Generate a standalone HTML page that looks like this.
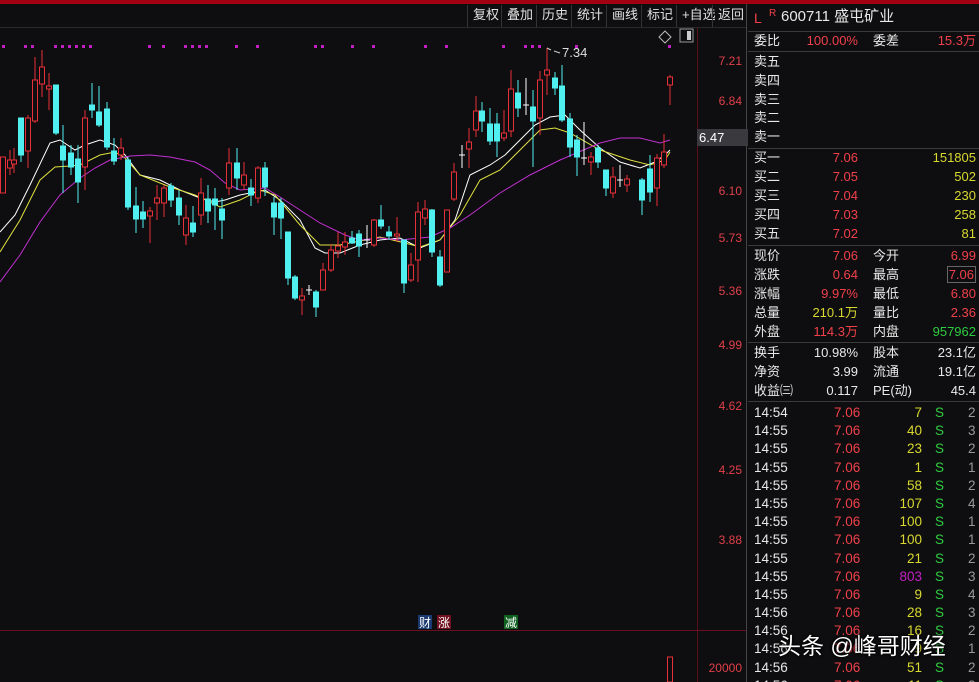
<!DOCTYPE html>
<html style="width:979px;height:682px;overflow:hidden"><head><meta charset="utf-8"><style>
body{margin:0;width:979px;height:682px;background:#0e0e10;overflow:hidden;position:relative;font-family:"Liberation Sans","Noto Sans CJK SC",sans-serif;font-size:13px;color:#ddd}
.a{position:absolute;white-space:nowrap;line-height:16px}
.r{text-align:right}
.red{color:#f0404a}.yel{color:#d8d830}.grn{color:#2ecc40}.wh{color:#e8e8e8}.gr{color:#999}.pur{color:#c020c0}
.tb{position:absolute;top:5px;height:22px;line-height:20px;color:#e0e0e0;font-size:13px;border-left:1px solid #333;padding:0 5px}
.sep{position:absolute;left:748px;width:231px;height:1px;background:#3a3a3a}
.pl{position:absolute;left:700px;width:42px;text-align:right;color:#e0404a;font-size:12px}
.tk{position:relative;height:18.2px}
</style></head><body>
<div style="position:absolute;left:0;top:0;width:979px;height:4px;background:#a00010"></div>
<div style="position:absolute;left:0;top:27px;width:746px;height:1px;background:#2a2a2a"></div>
<div class="tb" style="left:467px">复权</div><div class="tb" style="left:501px">叠加</div><div class="tb" style="left:536px">历史</div><div class="tb" style="left:571px">统计</div><div class="tb" style="left:606px">画线</div><div class="tb" style="left:641px">标记</div><div class="tb" style="left:676px">+自选</div><div class="tb" style="left:712px">返回</div>
<div style="position:absolute;left:746px;top:4px;width:1px;height:678px;background:#444"></div>
<div style="position:absolute;left:697px;top:28px;width:1px;height:654px;background:#5a1018"></div>
<div style="position:absolute;left:0;top:630px;width:746px;height:1px;background:#6a1020"></div>
<svg style="position:absolute;left:0;top:0" width="746" height="682">
<g fill="#c020c0">
<rect x="2" y="45" width="3" height="3"/><rect x="24" y="45" width="3" height="3"/><rect x="31" y="45" width="3" height="3"/><rect x="54" y="45" width="3" height="3"/><rect x="61" y="45" width="3" height="3"/><rect x="68" y="45" width="3" height="3"/><rect x="75" y="45" width="3" height="3"/><rect x="82" y="45" width="3" height="3"/><rect x="89" y="45" width="3" height="3"/><rect x="148" y="45" width="3" height="3"/><rect x="162" y="45" width="3" height="3"/><rect x="184" y="45" width="3" height="3"/><rect x="191" y="45" width="3" height="3"/><rect x="198" y="45" width="3" height="3"/><rect x="205" y="45" width="3" height="3"/><rect x="235" y="45" width="3" height="3"/><rect x="256" y="45" width="3" height="3"/><rect x="314" y="45" width="3" height="3"/><rect x="321" y="45" width="3" height="3"/><rect x="351" y="45" width="3" height="3"/><rect x="372" y="45" width="3" height="3"/><rect x="424" y="45" width="3" height="3"/><rect x="445" y="45" width="3" height="3"/><rect x="502" y="45" width="3" height="3"/><rect x="524" y="45" width="3" height="3"/><rect x="531" y="45" width="3" height="3"/><rect x="538" y="45" width="3" height="3"/><rect x="575" y="45" width="3" height="3"/><rect x="668" y="45" width="3" height="3"/>
</g>
<path d="M665 31l6 6l-6 6l-6-6z" fill="none" stroke="#bbb"/>
<rect x="680" y="29" width="13" height="13" fill="none" stroke="#999"/><rect x="687" y="31" width="4" height="9" fill="#ccc"/>
<g stroke-width="1">
<polyline fill="none" stroke="#fff" points="0,232 15,215 30,185 50,143 60,140 75,150 85,145 100,140 115,145 125,155 140,175 160,180 180,190 200,198 215,202 225,200 240,195 255,192 265,190 280,200 300,220 315,248 325,253 340,253 360,245 380,240 400,238 420,248 440,240 455,220 470,175 490,165 505,155 520,140 535,125 550,117 565,115 580,130 600,148 620,162 640,168 655,162 665,155 670,150"/>
<polyline fill="none" stroke="#e0e040" points="0,252 20,220 40,180 55,167 70,166 80,165 100,155 115,152 125,158 140,175 170,187 195,195 220,207 240,200 260,190 275,195 300,225 320,245 340,245 380,237 405,243 420,247 440,240 460,215 480,180 500,170 520,150 540,130 555,128 570,133 600,150 630,160 650,165 665,160 670,152"/>
<polyline fill="none" stroke="#c030d0" points="0,282 20,255 40,222 60,195 80,178 95,168 110,160 130,156 150,155 170,157 195,162 210,170 225,183 240,190 265,188 280,197 300,210 320,223 345,235 360,240 380,238 400,240 430,237 450,228 470,215 500,193 530,175 560,160 600,143 620,138 640,138 660,143 670,140"/>
</g>
<g stroke="#e8303a" fill="#0e0e10">
<line x1="3" y1="157" x2="3" y2="193"/><rect x="0.5" y="157" width="5" height="36"/>
<line x1="10" y1="150" x2="10" y2="175"/><rect x="7.5" y="160" width="5" height="8"/>
<line x1="14" y1="148" x2="14" y2="173"/><rect x="11.5" y="160" width="5" height="4"/>
<line x1="28" y1="115" x2="28" y2="168"/><rect x="25.5" y="118" width="5" height="33"/>
<line x1="35" y1="57" x2="35" y2="123"/><rect x="32.5" y="80" width="5" height="41"/>
<line x1="42" y1="50" x2="42" y2="97"/><rect x="39.5" y="67" width="5" height="17"/>
<line x1="49" y1="73" x2="49" y2="110"/><rect x="46.5" y="86" width="5" height="3"/>
<line x1="85" y1="110" x2="85" y2="190"/><rect x="82.5" y="118" width="5" height="49"/>
<line x1="121" y1="138" x2="121" y2="160"/><rect x="118.5" y="148" width="5" height="7"/>
<line x1="150" y1="207" x2="150" y2="243"/><rect x="147.5" y="211" width="5" height="5"/>
<line x1="157" y1="185" x2="157" y2="220"/><rect x="154.5" y="198" width="5" height="5"/>
<line x1="164" y1="185" x2="164" y2="217"/><rect x="161.5" y="188" width="5" height="15"/>
<line x1="186" y1="205" x2="186" y2="245"/><rect x="183.5" y="218" width="5" height="17"/>
<line x1="201" y1="178" x2="201" y2="225"/><rect x="198.5" y="193" width="5" height="22"/>
<line x1="229" y1="148" x2="229" y2="195"/><rect x="226.5" y="163" width="5" height="25"/>
<line x1="244" y1="162" x2="244" y2="190"/><rect x="241.5" y="175" width="5" height="10"/>
<line x1="258" y1="166" x2="258" y2="203"/><rect x="255.5" y="168" width="5" height="30"/>
<line x1="302" y1="288" x2="302" y2="315"/><rect x="299.5" y="296" width="5" height="4"/>
<line x1="323" y1="263" x2="323" y2="290"/><rect x="320.5" y="270" width="5" height="20"/>
<line x1="331" y1="244" x2="331" y2="272"/><rect x="328.5" y="250" width="5" height="20"/>
<line x1="338" y1="232" x2="338" y2="258"/><rect x="335.5" y="246" width="5" height="5"/>
<line x1="345" y1="232" x2="345" y2="255"/><rect x="342.5" y="242" width="5" height="5"/>
<line x1="374" y1="219" x2="374" y2="247"/><rect x="371.5" y="220" width="5" height="25"/>
<line x1="397" y1="217" x2="397" y2="242"/><rect x="394.5" y="234" width="5" height="2"/>
<line x1="411" y1="253" x2="411" y2="282"/><rect x="408.5" y="265" width="5" height="15"/>
<line x1="418" y1="202" x2="418" y2="282"/><rect x="415.5" y="212" width="5" height="48"/>
<line x1="425" y1="200" x2="425" y2="225"/><rect x="422.5" y="209" width="5" height="9"/>
<line x1="447" y1="210" x2="447" y2="272"/><rect x="444.5" y="210" width="5" height="62"/>
<line x1="454" y1="163" x2="454" y2="201"/><rect x="451.5" y="172" width="5" height="27"/>
<line x1="469" y1="128" x2="469" y2="168"/><rect x="466.5" y="142" width="5" height="7"/>
<line x1="476" y1="96" x2="476" y2="137"/><rect x="473.5" y="111" width="5" height="19"/>
<line x1="504" y1="110" x2="504" y2="141"/><rect x="501.5" y="133" width="5" height="5"/>
<line x1="511" y1="70" x2="511" y2="137"/><rect x="508.5" y="89" width="5" height="42"/>
<line x1="540" y1="71" x2="540" y2="135"/><rect x="537.5" y="80" width="5" height="38"/>
<line x1="547" y1="48" x2="547" y2="95"/><rect x="544.5" y="70" width="5" height="5"/>
<line x1="591" y1="152" x2="591" y2="175"/><rect x="588.5" y="157" width="5" height="5"/>
<line x1="613" y1="167" x2="613" y2="198"/><rect x="610.5" y="177" width="5" height="16"/>
<line x1="627" y1="175" x2="627" y2="192"/><rect x="624.5" y="179" width="5" height="6"/>
<line x1="657" y1="154" x2="657" y2="206"/><rect x="654.5" y="158" width="5" height="30"/>
<line x1="664" y1="134" x2="664" y2="168"/><rect x="661.5" y="152" width="5" height="13"/>
<line x1="670" y1="75" x2="670" y2="105"/><rect x="667.5" y="77" width="5" height="8"/>
</g>
<g stroke="#50f0f0" fill="#50f0f0">
<line x1="21" y1="118" x2="21" y2="162"/><rect x="18.5" y="118" width="5" height="37"/>
<line x1="56" y1="85" x2="56" y2="135"/><rect x="53.5" y="85" width="5" height="48"/>
<line x1="63" y1="125" x2="63" y2="193"/><rect x="60.5" y="146" width="5" height="14"/>
<line x1="71" y1="145" x2="71" y2="175"/><rect x="68.5" y="153" width="5" height="14"/>
<line x1="78" y1="145" x2="78" y2="203"/><rect x="75.5" y="159" width="5" height="23"/>
<line x1="92" y1="83" x2="92" y2="118"/><rect x="89.5" y="105" width="5" height="5"/>
<line x1="99" y1="86" x2="99" y2="127"/><rect x="96.5" y="112" width="5" height="13"/>
<line x1="107" y1="102" x2="107" y2="150"/><rect x="104.5" y="109" width="5" height="38"/>
<line x1="114" y1="138" x2="114" y2="165"/><rect x="111.5" y="151" width="5" height="10"/>
<line x1="128" y1="157" x2="128" y2="210"/><rect x="125.5" y="160" width="5" height="47"/>
<line x1="136" y1="187" x2="136" y2="233"/><rect x="133.5" y="206" width="5" height="13"/>
<line x1="143" y1="201" x2="143" y2="228"/><rect x="140.5" y="212" width="5" height="7"/>
<line x1="171" y1="183" x2="171" y2="207"/><rect x="168.5" y="186" width="5" height="14"/>
<line x1="179" y1="190" x2="179" y2="225"/><rect x="176.5" y="198" width="5" height="17"/>
<line x1="193" y1="206" x2="193" y2="237"/><rect x="190.5" y="223" width="5" height="9"/>
<line x1="208" y1="185" x2="208" y2="223"/><rect x="205.5" y="199" width="5" height="12"/>
<line x1="215" y1="188" x2="215" y2="230"/><rect x="212.5" y="199" width="5" height="6"/>
<line x1="222" y1="198" x2="222" y2="239"/><rect x="219.5" y="209" width="5" height="11"/>
<line x1="237" y1="148" x2="237" y2="190"/><rect x="234.5" y="163" width="5" height="15"/>
<line x1="251" y1="179" x2="251" y2="206"/><rect x="248.5" y="188" width="5" height="7"/>
<line x1="265" y1="162" x2="265" y2="196"/><rect x="262.5" y="168" width="5" height="19"/>
<line x1="274" y1="197" x2="274" y2="235"/><rect x="271.5" y="203" width="5" height="14"/>
<line x1="281" y1="198" x2="281" y2="239"/><rect x="278.5" y="203" width="5" height="15"/>
<line x1="288" y1="232" x2="288" y2="285"/><rect x="285.5" y="232" width="5" height="46"/>
<line x1="295" y1="275" x2="295" y2="300"/><rect x="292.5" y="277" width="5" height="21"/>
<line x1="316" y1="290" x2="316" y2="317"/><rect x="313.5" y="292" width="5" height="15"/>
<line x1="352" y1="231" x2="352" y2="244"/><rect x="349.5" y="238" width="5" height="5"/>
<line x1="359" y1="230" x2="359" y2="257"/><rect x="356.5" y="234" width="5" height="12"/>
<line x1="381" y1="205" x2="381" y2="229"/><rect x="378.5" y="220" width="5" height="6"/>
<line x1="389" y1="226" x2="389" y2="240"/><rect x="386.5" y="232" width="5" height="4"/>
<line x1="404" y1="240" x2="404" y2="293"/><rect x="401.5" y="240" width="5" height="43"/>
<line x1="432" y1="209" x2="432" y2="257"/><rect x="429.5" y="210" width="5" height="42"/>
<line x1="440" y1="250" x2="440" y2="287"/><rect x="437.5" y="257" width="5" height="28"/>
<line x1="482" y1="102" x2="482" y2="132"/><rect x="479.5" y="111" width="5" height="10"/>
<line x1="490" y1="108" x2="490" y2="145"/><rect x="487.5" y="124" width="5" height="17"/>
<line x1="497" y1="113" x2="497" y2="157"/><rect x="494.5" y="124" width="5" height="17"/>
<line x1="518" y1="80" x2="518" y2="117"/><rect x="515.5" y="93" width="5" height="15"/>
<line x1="533" y1="90" x2="533" y2="167"/><rect x="530.5" y="107" width="5" height="14"/>
<line x1="555" y1="72" x2="555" y2="95"/><rect x="552.5" y="78" width="5" height="10"/>
<line x1="562" y1="65" x2="562" y2="122"/><rect x="559.5" y="86" width="5" height="34"/>
<line x1="570" y1="113" x2="570" y2="157"/><rect x="567.5" y="119" width="5" height="28"/>
<line x1="577" y1="135" x2="577" y2="176"/><rect x="574.5" y="140" width="5" height="17"/>
<line x1="598" y1="145" x2="598" y2="168"/><rect x="595.5" y="148" width="5" height="14"/>
<line x1="606" y1="170" x2="606" y2="196"/><rect x="603.5" y="170" width="5" height="18"/>
<line x1="642" y1="178" x2="642" y2="215"/><rect x="639.5" y="180" width="5" height="20"/>
<line x1="650" y1="155" x2="650" y2="202"/><rect x="647.5" y="169" width="5" height="23"/>
</g>
<g stroke="#fff">
<line x1="309" y1="285" x2="309" y2="295"/><line x1="306" y1="290" x2="312" y2="290"/>
<line x1="367" y1="225" x2="367" y2="248"/><line x1="364" y1="240" x2="370" y2="240"/>
<line x1="462" y1="145" x2="462" y2="168"/><line x1="459" y1="155" x2="465" y2="155"/>
<line x1="526" y1="78" x2="526" y2="115"/><line x1="523" y1="105" x2="529" y2="105"/>
<line x1="584" y1="122" x2="584" y2="165"/><line x1="581" y1="158" x2="587" y2="158"/>
<line x1="620" y1="165" x2="620" y2="187"/><line x1="617" y1="180" x2="623" y2="180"/>
<path d="M547 48l4 2m3 1l6 2" fill="none" stroke="#ccc"/>
</g>
<text x="562" y="57" fill="#ddd" font-size="13" font-family="Liberation Sans">7.34</text>
<rect x="667.5" y="657" width="5" height="25" fill="none" stroke="#e8303a"/>
<rect x="418" y="615" width="14" height="14" fill="#1a3a70"/><text x="419" y="627" fill="#fff" font-size="12" font-family="Noto Sans CJK SC">财</text>
<rect x="437" y="615" width="14" height="14" fill="#701020"/><text x="438" y="627" fill="#fff" font-size="12" font-family="Noto Sans CJK SC">涨</text>
<rect x="504" y="615" width="14" height="14" fill="#106020"/><text x="505" y="627" fill="#fff" font-size="12" font-family="Noto Sans CJK SC">减</text>
</svg>
<div class="pl" style="top:54px">7.21</div>
<div class="pl" style="top:94px">6.84</div>
<div class="pl" style="top:184px">6.10</div>
<div class="pl" style="top:231px">5.73</div>
<div class="pl" style="top:284px">5.36</div>
<div class="pl" style="top:338px">4.99</div>
<div class="pl" style="top:399px">4.62</div>
<div class="pl" style="top:463px">4.25</div>
<div class="pl" style="top:533px">3.88</div>
<div class="pl" style="top:661px">20000</div>
<div style="position:absolute;left:697px;top:129px;width:49px;height:17px;background:#3a3a3e;color:#fff;font-size:13px;line-height:17px;padding-left:2px">6.47</div>

<div class="a red" style="left:754px;top:10px;font-size:14px">L</div>
<div class="a red" style="left:769px;top:6px;font-size:10px">R</div>
<div class="a wh" style="left:781px;top:9px;font-size:15px">600711 盛屯矿业</div>
<div class="sep" style="top:31px"></div>
<div class="a wh" style="left:754px;top:33px">委比</div><div class="a red r" style="left:800px;width:58px;top:33px">100.00%</div>
<div class="a wh" style="left:873px;top:33px">委差</div><div class="a red r" style="left:900px;width:76px;top:33px">15.3万</div>
<div class="sep" style="top:51px"></div>
<div class="a wh" style="left:754px;top:54px">卖五</div>
<div class="a wh" style="left:754px;top:73px">卖四</div>
<div class="a wh" style="left:754px;top:92px">卖三</div>
<div class="a wh" style="left:754px;top:110px">卖二</div>
<div class="a wh" style="left:754px;top:129px">卖一</div>
<div class="sep" style="top:148px"></div>
<div class="a wh" style="left:754px;top:150px">买一</div><div class="a red r" style="left:800px;width:58px;top:150px">7.06</div><div class="a yel r" style="left:900px;width:76px;top:150px">151805</div>
<div class="a wh" style="left:754px;top:169px">买二</div><div class="a red r" style="left:800px;width:58px;top:169px">7.05</div><div class="a yel r" style="left:900px;width:76px;top:169px">502</div>
<div class="a wh" style="left:754px;top:188px">买三</div><div class="a red r" style="left:800px;width:58px;top:188px">7.04</div><div class="a yel r" style="left:900px;width:76px;top:188px">230</div>
<div class="a wh" style="left:754px;top:207px">买四</div><div class="a red r" style="left:800px;width:58px;top:207px">7.03</div><div class="a yel r" style="left:900px;width:76px;top:207px">258</div>
<div class="a wh" style="left:754px;top:226px">买五</div><div class="a red r" style="left:800px;width:58px;top:226px">7.02</div><div class="a yel r" style="left:900px;width:76px;top:226px">81</div>
<div class="sep" style="top:245px"></div>
<div class="a wh" style="left:754px;top:248px">现价</div><div class="a red r" style="left:800px;width:58px;top:248px">7.06</div><div class="a wh" style="left:873px;top:248px">今开</div><div class="a red r" style="left:900px;width:76px;top:248px">6.99</div>
<div class="a wh" style="left:754px;top:267px">涨跌</div><div class="a red r" style="left:800px;width:58px;top:267px">0.64</div><div class="a wh" style="left:873px;top:267px">最高</div><div class="a red r" style="left:900px;width:76px;top:267px"><span style="border:1px solid #666;padding:0 1px">7.06</span></div>
<div class="a wh" style="left:754px;top:286px">涨幅</div><div class="a red r" style="left:800px;width:58px;top:286px">9.97%</div><div class="a wh" style="left:873px;top:286px">最低</div><div class="a red r" style="left:900px;width:76px;top:286px">6.80</div>
<div class="a wh" style="left:754px;top:305px">总量</div><div class="a yel r" style="left:800px;width:58px;top:305px">210.1万</div><div class="a wh" style="left:873px;top:305px">量比</div><div class="a red r" style="left:900px;width:76px;top:305px">2.36</div>
<div class="a wh" style="left:754px;top:324px">外盘</div><div class="a red r" style="left:800px;width:58px;top:324px">114.3万</div><div class="a wh" style="left:873px;top:324px">内盘</div><div class="a grn r" style="left:900px;width:76px;top:324px">957962</div>
<div class="sep" style="top:342px"></div>
<div class="a wh" style="left:754px;top:345px">换手</div><div class="a wh r" style="left:800px;width:58px;top:345px">10.98%</div><div class="a wh" style="left:873px;top:345px">股本</div><div class="a wh r" style="left:900px;width:76px;top:345px">23.1亿</div>
<div class="a wh" style="left:754px;top:364px">净资</div><div class="a wh r" style="left:800px;width:58px;top:364px">3.99</div><div class="a wh" style="left:873px;top:364px">流通</div><div class="a wh r" style="left:900px;width:76px;top:364px">19.1亿</div>
<div class="a wh" style="left:754px;top:383px">收益㈢</div><div class="a wh r" style="left:800px;width:58px;top:383px">0.117</div><div class="a wh" style="left:873px;top:383px">PE(动)</div><div class="a wh r" style="left:900px;width:76px;top:383px">45.4</div>
<div class="sep" style="top:401px"></div>

<div style="position:absolute;left:754px;top:404px;width:225px;height:278px;overflow:hidden;line-height:18.2px;font-size:13.5px">
<div class="tk"><span class="wh">14:54</span><span class="red" style="position:absolute;left:80px">7.06</span><span class="yel r" style="position:absolute;right:57px">7</span><span class="grn" style="position:absolute;left:181px">S</span><span class="gr" style="position:absolute;left:214px">2</span></div>
<div class="tk"><span class="wh">14:55</span><span class="red" style="position:absolute;left:80px">7.06</span><span class="yel r" style="position:absolute;right:57px">40</span><span class="grn" style="position:absolute;left:181px">S</span><span class="gr" style="position:absolute;left:214px">3</span></div>
<div class="tk"><span class="wh">14:55</span><span class="red" style="position:absolute;left:80px">7.06</span><span class="yel r" style="position:absolute;right:57px">23</span><span class="grn" style="position:absolute;left:181px">S</span><span class="gr" style="position:absolute;left:214px">2</span></div>
<div class="tk"><span class="wh">14:55</span><span class="red" style="position:absolute;left:80px">7.06</span><span class="yel r" style="position:absolute;right:57px">1</span><span class="grn" style="position:absolute;left:181px">S</span><span class="gr" style="position:absolute;left:214px">1</span></div>
<div class="tk"><span class="wh">14:55</span><span class="red" style="position:absolute;left:80px">7.06</span><span class="yel r" style="position:absolute;right:57px">58</span><span class="grn" style="position:absolute;left:181px">S</span><span class="gr" style="position:absolute;left:214px">2</span></div>
<div class="tk"><span class="wh">14:55</span><span class="red" style="position:absolute;left:80px">7.06</span><span class="yel r" style="position:absolute;right:57px">107</span><span class="grn" style="position:absolute;left:181px">S</span><span class="gr" style="position:absolute;left:214px">4</span></div>
<div class="tk"><span class="wh">14:55</span><span class="red" style="position:absolute;left:80px">7.06</span><span class="yel r" style="position:absolute;right:57px">100</span><span class="grn" style="position:absolute;left:181px">S</span><span class="gr" style="position:absolute;left:214px">1</span></div>
<div class="tk"><span class="wh">14:55</span><span class="red" style="position:absolute;left:80px">7.06</span><span class="yel r" style="position:absolute;right:57px">100</span><span class="grn" style="position:absolute;left:181px">S</span><span class="gr" style="position:absolute;left:214px">1</span></div>
<div class="tk"><span class="wh">14:55</span><span class="red" style="position:absolute;left:80px">7.06</span><span class="yel r" style="position:absolute;right:57px">21</span><span class="grn" style="position:absolute;left:181px">S</span><span class="gr" style="position:absolute;left:214px">2</span></div>
<div class="tk"><span class="wh">14:55</span><span class="red" style="position:absolute;left:80px">7.06</span><span class="pur r" style="position:absolute;right:57px">803</span><span class="grn" style="position:absolute;left:181px">S</span><span class="gr" style="position:absolute;left:214px">3</span></div>
<div class="tk"><span class="wh">14:55</span><span class="red" style="position:absolute;left:80px">7.06</span><span class="yel r" style="position:absolute;right:57px">9</span><span class="grn" style="position:absolute;left:181px">S</span><span class="gr" style="position:absolute;left:214px">4</span></div>
<div class="tk"><span class="wh">14:56</span><span class="red" style="position:absolute;left:80px">7.06</span><span class="yel r" style="position:absolute;right:57px">28</span><span class="grn" style="position:absolute;left:181px">S</span><span class="gr" style="position:absolute;left:214px">3</span></div>
<div class="tk"><span class="wh">14:56</span><span class="red" style="position:absolute;left:80px">7.06</span><span class="yel r" style="position:absolute;right:57px">16</span><span class="grn" style="position:absolute;left:181px">S</span><span class="gr" style="position:absolute;left:214px">2</span></div>
<div class="tk"><span class="wh">14:56</span><span class="red" style="position:absolute;left:80px">7.06</span><span class="yel r" style="position:absolute;right:57px">9</span><span class="grn" style="position:absolute;left:181px">S</span><span class="gr" style="position:absolute;left:214px">1</span></div>
<div class="tk"><span class="wh">14:56</span><span class="red" style="position:absolute;left:80px">7.06</span><span class="yel r" style="position:absolute;right:57px">51</span><span class="grn" style="position:absolute;left:181px">S</span><span class="gr" style="position:absolute;left:214px">2</span></div>
<div class="tk"><span class="wh">14:56</span><span class="red" style="position:absolute;left:80px">7.06</span><span class="yel r" style="position:absolute;right:57px">11</span><span class="grn" style="position:absolute;left:181px">S</span><span class="gr" style="position:absolute;left:214px">3</span></div>
</div>
<div class="a" style="left:778px;top:632px;font-size:23px;line-height:28px;color:#fff;text-shadow:0 0 3px #000,0 0 2px #000">头条 @峰哥财经</div>
</body></html>
